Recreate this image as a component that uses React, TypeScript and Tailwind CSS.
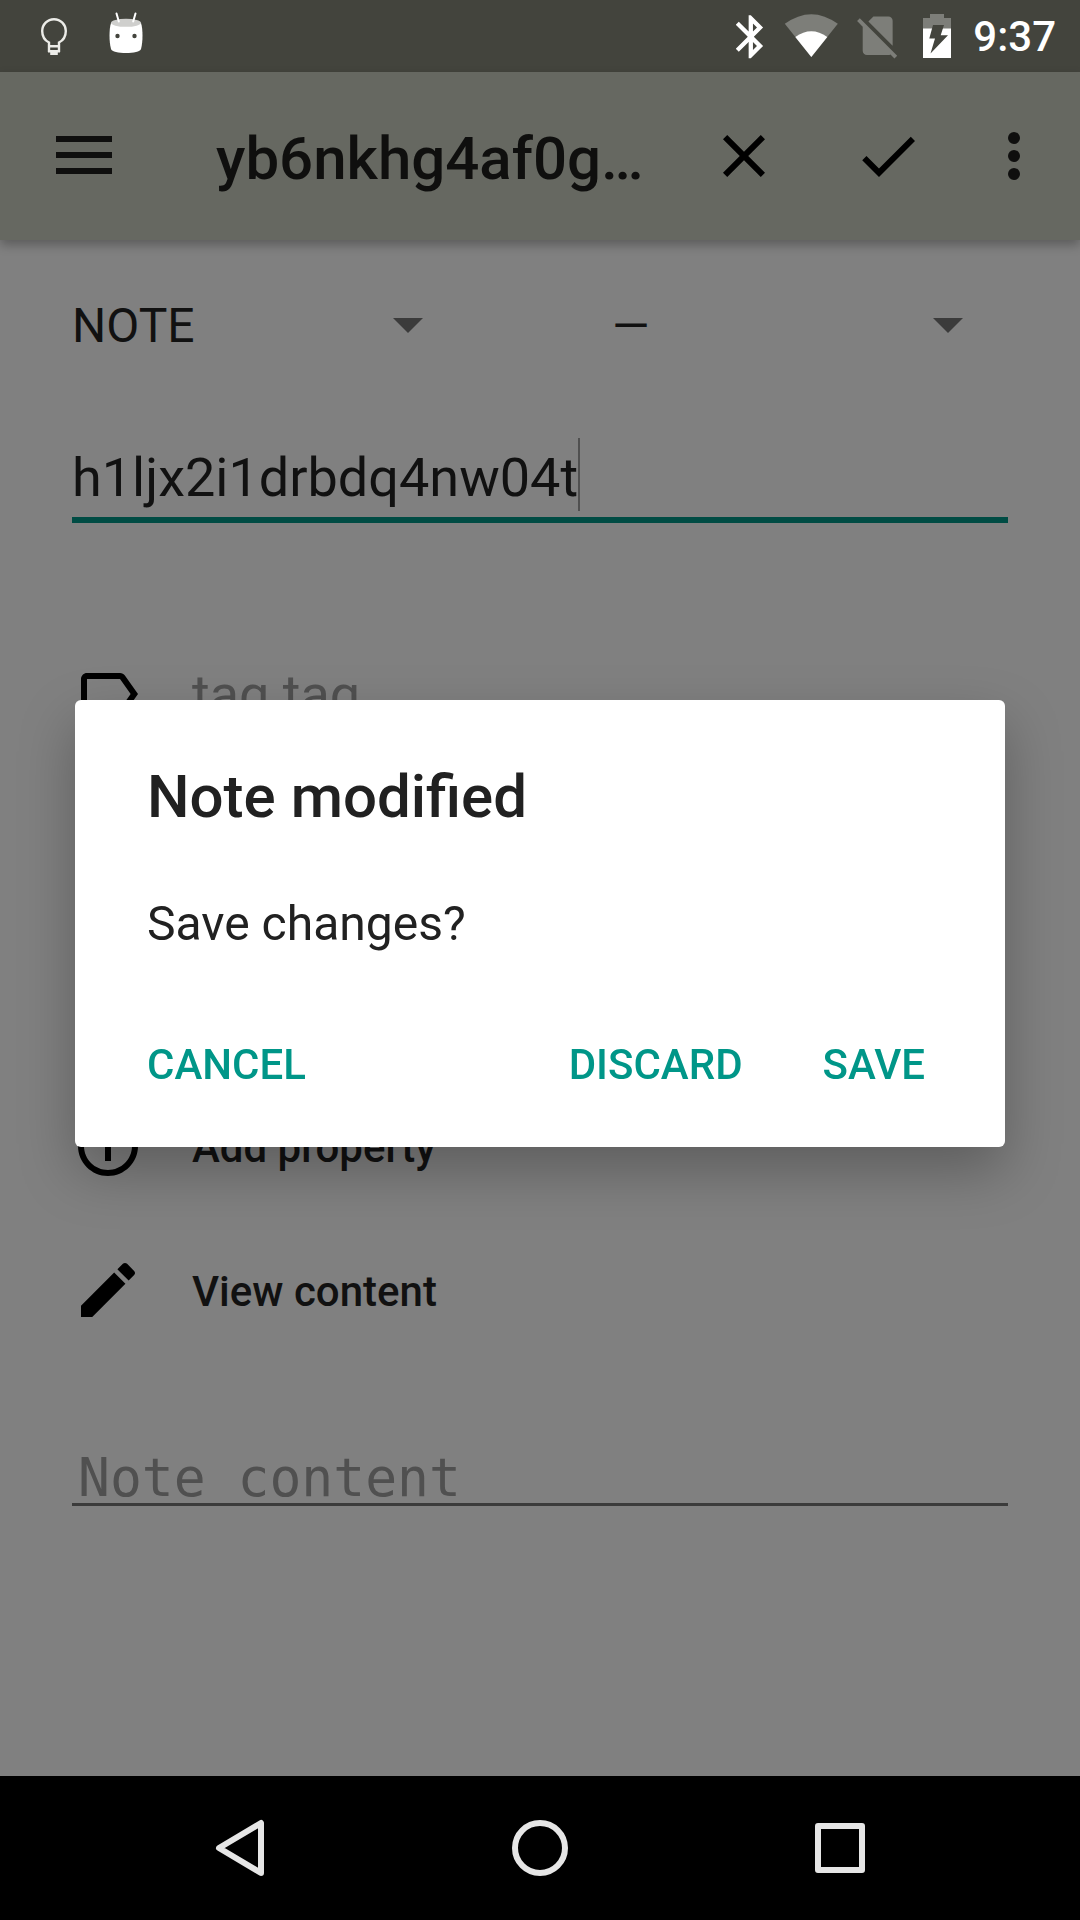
import React from 'react';

const LIGHT = '#ffffff';
const FAINT = '#7d7e79';
const STATUS_BG = '#43443d';

function BulbIcon() {
  return (
    <svg width="72" height="72" viewBox="0 0 72 72" fill="none" aria-hidden="true">
      <path
        d="M31 52V42.500C27 40.500 24.200 36.500 24.200 31a11.800 11.800 0 0 1 23.600 0c0 5.500-2.800 9.500-6.800 11.500V52"
        stroke="#ecece8"
        strokeWidth="2.400"
      />
      <path d="M30 45h12v2.500H30zM30 50h12v2.500h-2.200v2.500h-7.600v-2.500H30z" fill="#ecece8" />
    </svg>
  );
}

function MarshmallowIcon() {
  return (
    <svg width="72" height="72" viewBox="0 0 72 72" aria-hidden="true">
      <path
        d="M21 23C19 29 19 42 21 49c.8 2.700 7.500 4 15 4s14.200-1.300 15-4c2-7 2-20 0-26z"
        fill={LIGHT}
      />
      <ellipse cx="36" cy="22.800" rx="15" ry="4" fill="#cfcfcd" />
      <path d="M26.500 13.500l2.300 8M45.500 13.500l-2.300 8" stroke={LIGHT} strokeWidth="2" strokeLinecap="round" />
      <circle cx="27.500" cy="36" r="2.200" fill={STATUS_BG} />
      <circle cx="44.500" cy="36" r="2.200" fill={STATUS_BG} />
    </svg>
  );
}

function BluetoothIcon() {
  return (
    <svg width="30" height="72" viewBox="0 0 30 72" aria-hidden="true">
      <g transform="translate(-11 11) scale(2.15)">
        <path
          fill={LIGHT}
          d="M17.710 7.710L12 2h-1v7.590L6.410 5 5 6.410 10.590 12 5 17.590 6.410 19 11 14.410V22h1l5.710-5.710-4.300-4.290 4.300-4.290zM13 5.830l1.880 1.880L13 9.590V5.830zm1.880 10.460L13 18.170v-3.760l1.880 1.880z"
        />
      </g>
    </svg>
  );
}

function WifiIcon() {
  return (
    <svg width="54" height="72" viewBox="0 0 54 72" aria-hidden="true">
      <path d="M27.300 57L.8 23.800Q27.300 4.500 53.800 23.800z" fill={FAINT} />
      <path d="M27.300 57L11.300 37Q27.300 25.500 43.300 37z" fill={LIGHT} />
    </svg>
  );
}

function NoSimIcon() {
  return (
    <svg width="45" height="72" viewBox="0 0 45 72" aria-hidden="true">
      <g transform="translate(-4 10) scale(2.14)">
        <path
          fill={FAINT}
          d="M18.990 5c0-1.100-.890-2-1.990-2h-7L7.660 5.340 19 16.680 18.990 5zM3.650 3.880L2.380 5.150 5 7.770V19c0 1.100.9 2 2 2h10.010c.350 0 .670-.1.960-.260l1.880 1.880 1.270-1.270L3.650 3.880z"
        />
      </g>
    </svg>
  );
}

function BatteryIcon() {
  return (
    <svg width="36" height="72" viewBox="0 0 36 72" aria-hidden="true">
      <path d="M4 29V18h7v-4h14v4h7v11z" fill={FAINT} />
      <path d="M4 28.500h28V58H4z" fill={LIGHT} />
      <path d="M14 25h11l-3.300 10.300H29L11.500 53.500 16 38.500h-5.700z" fill={STATUS_BG} />
    </svg>
  );
}

function Glyph({ d }: { d: string }) {
  return (
    <svg className="size-[72px] shrink-0" viewBox="0 0 24 24" fill="#000000" aria-hidden="true">
      <path d={d} />
    </svg>
  );
}

function Spinner({ label, options }: { label: string; options: string[] }) {
  return (
    <div className="grid h-[72px] items-center pr-[117px] pl-[72px]">
      <select
        aria-label={label}
        className="col-start-1 row-start-1 h-full w-full appearance-none bg-transparent text-[48px] text-[#111111] outline-none"
      >
        {options.map((option) => (
          <option key={option}>{option}</option>
        ))}
      </select>
      <svg
        className="pointer-events-none col-start-1 row-start-1 justify-self-end"
        width="30"
        height="16"
        viewBox="0 0 30 16"
        aria-hidden="true"
      >
        <path d="M0 0h30L15 15z" fill="#3b3b3b" />
      </svg>
    </div>
  );
}

function StatusBar() {
  return (
    <div className="flex h-[72px] items-center justify-between bg-[#43443d] pr-6 pl-[18px]">
      <div className="flex">
        <BulbIcon />
        <MarshmallowIcon />
      </div>
      <div className="flex items-center gap-[18px]">
        <BluetoothIcon />
        <WifiIcon />
        <NoSimIcon />
        <BatteryIcon />
        <span className="pt-0.5 text-[42px] leading-[72px] font-medium text-white">9:37</span>
      </div>
    </div>
  );
}

function AppBar() {
  return (
    <header className="z-10 flex h-[168px] items-center bg-[#666861] pr-3 shadow-[0_5px_10px_rgba(0,0,0,0.28)]">
      <button type="button" aria-label="Menu" className="flex h-full w-[168px] items-center justify-center">
        <svg width="56" height="40" viewBox="0 0 56 40" fill="#0f0f0e" aria-hidden="true">
          <path d="M0 0h56v6H0zM0 16h56v6H0zM0 32h56v6H0z" />
        </svg>
      </button>
      <h1 className="ml-12 min-w-0 flex-1 truncate pt-1.5 text-[60px] leading-[72px] font-medium text-[#0f0f0e]">
        yb6nkhg4af0g…
      </h1>
      <button type="button" aria-label="Close" className="flex h-full w-36 items-center justify-center">
        <Glyph d="M19 6.410L17.590 5 12 10.590 6.410 5 5 6.410 10.590 12 5 17.590 6.410 19 12 13.410 17.590 19 19 17.590 13.410 12z" />
      </button>
      <button type="button" aria-label="Done" className="flex h-full w-36 items-center justify-center">
        <Glyph d="M9 16.170L4.830 12l-1.420 1.410L9 19 21 7l-1.410-1.410z" />
      </button>
      <button type="button" aria-label="More options" className="flex h-full w-[108px] items-center justify-center">
        <svg width="12" height="48" viewBox="0 0 12 48" fill="#0f0f0e" aria-hidden="true">
          <circle cx="6" cy="6" r="6" />
          <circle cx="6" cy="24" r="6" />
          <circle cx="6" cy="42" r="6" />
        </svg>
      </button>
    </header>
  );
}

function NoteForm() {
  return (
    <main className="flex-1 bg-[#808080] pt-[50px]">
      <div className="grid grid-cols-2">
        <Spinner label="Note type" options={['NOTE']} />
        <Spinner label="Note mime" options={['—']} />
      </div>

      <div className="mx-[72px] mt-[75px] flex h-[86px] border-b-6 border-[#004c44]">
        <input
          aria-label="Title"
          defaultValue="h1ljx2i1drbdq4nw04t"
          className="[field-sizing:content] bg-transparent text-[54px] text-[#111111] outline-none"
        />
        <span className="mt-px h-[73px] w-0.5 bg-[#505050]" />
      </div>

      <label className="mx-[72px] mt-[135px] flex h-[72px] items-center gap-12">
        <Glyph d="M17.630 5.840C17.270 5.330 16.670 5 16 5L5 5.010C3.900 5.010 3 5.900 3 7v10c0 1.100.9 1.990 2 1.990L16 19c.670 0 1.270-.330 1.630-.840L22 12l-4.370-6.160zM16 17H5V7h11l3.550 5L16 17z" />
        <input
          aria-label="Tags"
          placeholder="tag tag"
          className="h-full min-w-0 flex-1 bg-transparent text-[54px] outline-none placeholder:text-[#505050]"
        />
      </label>

      <div className="mx-[72px] mt-[344px] flex flex-col">
        <button type="button" className="flex h-36 items-center gap-12 text-[42px] font-medium text-[#111111]">
          <Glyph d="M11 17h2v-6h-2v6zm1-15C6.480 2 2 6.480 2 12s4.480 10 10 10 10-4.480 10-10S17.520 2 12 2zm0 18c-4.410 0-8-3.590-8-8s3.590-8 8-8 8 3.590 8 8-3.590 8-8 8zM11 9h2V7h-2v2z" />
          <span className="pt-0.5">Add property</span>
        </button>
        <button type="button" className="flex h-36 items-center gap-12 text-[42px] font-medium text-[#111111]">
          <Glyph d="M3 17.250V21h3.750L17.810 9.940l-3.750-3.750L3 17.250zM20.710 7.040c.390-.390.390-1.020 0-1.410l-2.340-2.340c-.390-.390-1.020-.390-1.410 0l-1.830 1.830 3.750 3.750 1.830-1.830z" />
          <span className="pt-0.5">View content</span>
        </button>
      </div>

      <div className="mx-[72px] mt-[91px] flex border-b-3 border-[#3b3b3b] pl-1.5">
        <input
          aria-label="Note content"
          placeholder="Note content"
          className="h-[50px] min-w-0 flex-1 bg-transparent font-['DejaVu_Sans_Mono',monospace] text-[53px] outline-none placeholder:text-[#505050]"
        />
      </div>
    </main>
  );
}

function NavigationBar() {
  return (
    <nav className="flex h-36 justify-center bg-black">
      <button type="button" aria-label="Back" className="flex w-[300px] items-center justify-center">
        <svg width="56" height="60" viewBox="0 0 56 60" fill="none" stroke="#e6e6e6" strokeWidth="6" strokeLinejoin="round" aria-hidden="true">
          <path d="M49 5v50L7 30z" />
        </svg>
      </button>
      <button type="button" aria-label="Home" className="flex w-[300px] items-center justify-center">
        <svg width="56" height="56" viewBox="0 0 56 56" fill="none" stroke="#e6e6e6" strokeWidth="6" aria-hidden="true">
          <circle cx="28" cy="28" r="25" />
        </svg>
      </button>
      <button type="button" aria-label="Overview" className="flex w-[300px] items-center justify-center">
        <svg width="50" height="50" viewBox="0 0 50 50" fill="none" stroke="#e6e6e6" strokeWidth="6" strokeLinejoin="round" aria-hidden="true">
          <path d="M3 3h44v44H3z" />
        </svg>
      </button>
    </nav>
  );
}

function SaveDialog() {
  return (
    <div className="fixed inset-x-0 top-[72px] bottom-[145px] z-20 flex items-center px-[75px]">
      <div
        role="alertdialog"
        aria-labelledby="dialog-title"
        aria-describedby="dialog-message"
        className="w-full rounded-md bg-white px-[72px] pt-[62px] pb-[29px] text-[#212121] shadow-[0_24px_56px_rgba(0,0,0,0.27)]"
      >
        <h2 id="dialog-title" className="text-[60px] leading-[70px] font-medium">
          Note modified
        </h2>
        <p id="dialog-message" className="mt-16 text-[48px] leading-[56px]">
          Save changes?
        </p>
        <div className="mt-[58px] flex h-[108px] gap-20 pr-2 text-[42px] font-medium text-[#009688]">
          <button type="button" className="mr-auto">CANCEL</button>
          <button type="button">DISCARD</button>
          <button type="button">SAVE</button>
        </div>
      </div>
    </div>
  );
}

export default function App() {
  return (
    <div className="flex min-h-screen flex-col font-[Roboto,sans-serif]">
      <StatusBar />
      <AppBar />
      <NoteForm />
      <NavigationBar />
      <SaveDialog />
    </div>
  );
}
